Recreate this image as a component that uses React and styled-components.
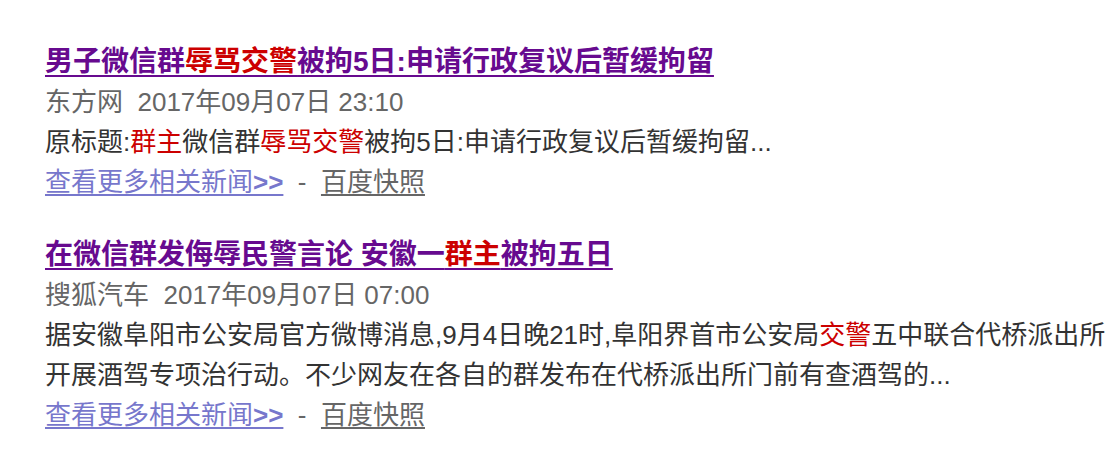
import React from "react";
import styled, { createGlobalStyle } from "styled-components";

const GlobalStyle = createGlobalStyle`
  body {
    margin: 0;
    background: #fff;
    font-family: "Liberation Sans", Arial, "Noto Sans CJK SC", sans-serif;
  }
`;

const Container = styled.div`
  display: flex;
  flex-direction: column;
  gap: 33px;
  padding: 42px 0 0 45px;
`;

const Result = styled.div`
  display: flex;
  flex-direction: column;
`;

const Title = styled.a`
  font-size: 28px;
  line-height: 40px;
  font-weight: bold;
  color: #670a8f;
  text-decoration: underline;
  text-underline-offset: 4px;
  white-space: nowrap;
  cursor: pointer;
`;

const Em = styled.em`
  font-style: normal;
  color: #cc0000;
`;

const Source = styled.div`
  font-size: 26px;
  line-height: 40px;
  color: #666;
  white-space: pre;
`;

const Summary = styled.div`
  font-size: 26px;
  line-height: 40px;
  color: #333;
  white-space: nowrap;
`;

const Links = styled.div`
  font-size: 26px;
  line-height: 40px;
  color: #666;
  white-space: pre;
`;

const MoreLink = styled.a`
  color: ${(p) => (p.$grey ? "#666" : "#7777cc")};
  text-decoration: underline;
  text-underline-offset: 3px;
  cursor: pointer;
`;

const Arrows = styled.b`
  font-weight: bold;
`;

const results = [
  {
    title: [
      "男子微信群",
      { em: "辱骂交警" },
      "被拘5日:申请行政复议后暂缓拘留",
    ],
    source: "东方网",
    time: "2017年09月07日 23:10",
    summary: [
      [
        "原标题:",
        { em: "群主" },
        "微信群",
        { em: "辱骂交警" },
        "被拘5日:申请行政复议后暂缓拘留...",
      ],
    ],
  },
  {
    title: ["在微信群发侮辱民警言论 安徽一", { em: "群主" }, "被拘五日"],
    source: "搜狐汽车",
    time: "2017年09月07日 07:00",
    summary: [
      [
        "据安徽阜阳市公安局官方微博消息,9月4日晚21时,阜阳界首市公安局",
        { em: "交警" },
        "五中联合代桥派出所",
      ],
      ["开展酒驾专项治行动。不少网友在各自的群发布在代桥派出所门前有查酒驾的..."],
    ],
  },
];

const renderParts = (parts) =>
  parts.map((p, i) =>
    typeof p === "string" ? <React.Fragment key={i}>{p}</React.Fragment> : <Em key={i}>{p.em}</Em>
  );

const App = () => {
  return (
    <>
      <GlobalStyle />
      <Container>
        {results.map((r, idx) => (
          <Result key={idx}>
            <div>
              <Title>{renderParts(r.title)}</Title>
            </div>
            <Source>
              {r.source}
              {"  "}
              {r.time}
            </Source>
            {r.summary.map((line, i) => (
              <Summary key={i}>{renderParts(line)}</Summary>
            ))}
            <Links>
              <MoreLink>
                查看更多相关新闻<Arrows>&gt;&gt;</Arrows>
              </MoreLink>
              {"  -  "}
              <MoreLink $grey>百度快照</MoreLink>
            </Links>
          </Result>
        ))}
      </Container>
    </>
  );
};

export default App;
